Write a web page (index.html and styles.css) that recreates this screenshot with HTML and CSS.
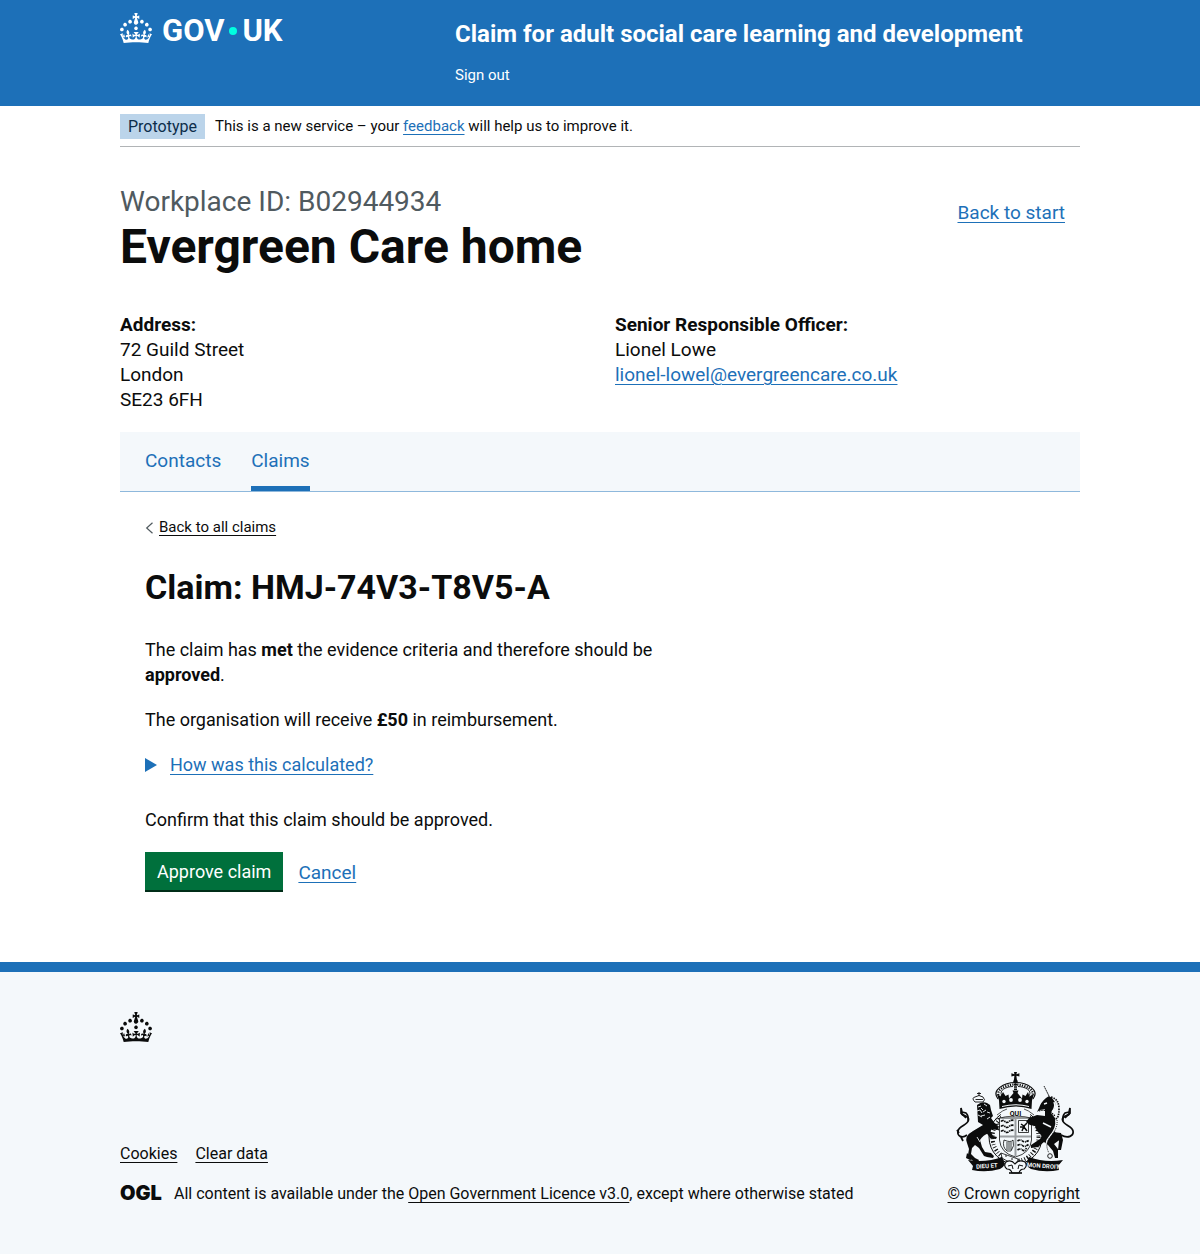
FILE: index.html
```html
<!DOCTYPE html>
<html lang="en">
<head>
<meta charset="utf-8">
<meta name="viewport" content="width=device-width, initial-scale=1">
<title>Claim for adult social care learning and development</title>
<link rel="stylesheet" href="styles.css">
</head>
<body>
<svg class="defs" aria-hidden="true">
  <symbol id="crown" viewBox="0 0 32 30">
    <path fill="currentColor" fill-rule="evenodd" d="M22.6 10.4c-1 .4-2-.1-2.4-1-.4-.9.1-2 1-2.4.9-.4 2 .1 2.4 1s-.1 2-1 2.4m-5.9 6.7c-.9.4-2-.1-2.4-1-.4-.9.1-2 1-2.4.9-.4 2 .1 2.4 1s-.1 2-1 2.4m10.8-3.7c-1 .4-2-.1-2.4-1-.4-.9.1-2 1-2.4.9-.4 2 .1 2.4 1s0 2-1 2.4m3.3 4.8c-1 .4-2-.1-2.4-1-.4-.9.1-2 1-2.4.9-.4 2 .1 2.4 1s-.1 2-1 2.4M17 4.7l2.3 1.2V2.5l-2.3.7-.2-.2.9-3h-3.4l.9 3-.2.2c-.1.1-2.3-.7-2.3-.7v3.4L15 4.7c.1.1.1.2.2.2l-1.3 4c-.1.2-.1.4-.1.6 0 1.1.8 2 1.9 2.2h.7c1-.2 1.9-1.1 1.9-2.1 0-.2 0-.4-.1-.6l-1.3-4c-.1-.2 0-.2.1-.3m-7.6 5.7c.9.4 2-.1 2.4-1 .4-.9-.1-2-1-2.4-.9-.4-2 .1-2.4 1s0 2 1 2.4m-5 3c.9.4 2-.1 2.4-1 .4-.9-.1-2-1-2.4-.9-.4-2 .1-2.4 1s.1 2 1 2.4m-3.2 4.8c.9.4 2-.1 2.4-1 .4-.9-.1-2-1-2.4-.9-.4-2 .1-2.4 1s0 2 1 2.4m14.8 11c4.4 0 8.6.3 12.3.8 1.1-4.5 2.4-7 3.7-8.8l-2.5-.9c.2 1.3.3 1.9 0 2.7-.4-.4-.8-1.1-1.1-2.3l-1.2 4c.7-.5 1.3-.8 2-.9-1.1 2.5-2.6 3.1-3.5 3-1.1-.2-1.7-1.2-1.5-2.1.3-1.2 1.5-1.5 2.1-.1 1.1-2.3-.8-3-2-2.3 1.9-1.9 2.1-3.5.6-5.6-2.1 1.6-2.1 3.2-1.2 5.5-1.2-1.4-3.2-.6-2.5 1.6.9-1.4 2.1-.5 1.9.8-.2 1.1-1.7 2.1-3.5 1.9-2.7-.2-2.9-2.1-2.9-3.6.7-.1 1.9.5 2.9 1.9l.4-4.3c-1.1 1.1-2.1 1.4-3.2 1.4.4-1.2 2.1-3 2.1-3h-5.4s1.7 1.9 2.1 3c-1.1 0-2.1-.2-3.2-1.4l.4 4.3c1-1.4 2.2-2 2.9-1.9-.1 1.5-.2 3.4-2.9 3.6-1.9.2-3.4-.8-3.5-1.9-.2-1.3 1-2.2 1.9-.8.7-2.3-1.2-3-2.5-1.6.9-2.2.9-3.9-1.2-5.5-1.5 2-1.3 3.7.6 5.6-1.2-.7-3.1 0-2 2.3.6-1.4 1.8-1.1 2.1.1.2.9-.3 1.9-1.5 2.1-.9.2-2.4-.5-3.5-3 .6 0 1.2.3 2 .9l-1.2-4c-.3 1.1-.7 1.9-1.1 2.3-.3-.8-.2-1.4 0-2.7l-2.9.9C1.3 23 2.6 25.5 3.7 30c3.7-.5 7.9-.8 12.3-.8"/>
  </symbol>
</svg>

<header class="header">
  <div class="container header-row">
    <a class="logo" href="#" aria-label="GOV.UK">
      <svg class="crown" aria-hidden="true"><use href="#crown"/></svg>
      <span class="logo-name">GOV<span class="logo-dot"></span>UK</span>
    </a>
    <div class="header-content">
      <a class="service-name" href="#">Claim for adult social care learning and development</a>
      <nav aria-label="Account"><a class="sign-out" href="#">Sign out</a></nav>
    </div>
  </div>
</header>

<div class="container">
  <div class="phase-banner">
    <strong class="tag">Prototype</strong>
    <span>This is a new service – your <a class="link" href="#">feedback</a> will help us to improve it.</span>
  </div>

  <main>
    <div class="title-row">
      <div>
        <span class="caption">Workplace ID: B02944934</span>
        <h1 class="heading-xl">Evergreen Care home</h1>
      </div>
      <a class="link start-link" href="#">Back to start</a>
    </div>

    <div class="details-grid">
      <div>
        <h2 class="heading-s">Address:</h2>
        <p>72 Guild Street<br>London<br>SE23 6FH</p>
      </div>
      <div>
        <h2 class="heading-s">Senior Responsible Officer:</h2>
        <p>Lionel Lowe<br><a class="link" href="#">lionel-lowel@evergreencare.co.uk</a></p>
      </div>
    </div>

    <nav class="tabs" aria-label="Workplace">
      <a class="tab" href="#">Contacts</a>
      <a class="tab tab-current" href="#" aria-current="page">Claims</a>
    </nav>

    <div class="claim">
      <a class="back-link" href="#">
        <svg class="chevron" viewBox="0 0 8 12" aria-hidden="true"><path d="M7.500.7 1.700 6l5.800 5.300" fill="none" stroke="#505a5f" stroke-width="1.200"/></svg>
        <span class="back-text">Back to all claims</span>
      </a>
      <h2 class="heading-l">Claim: HMJ-74V3-T8V5-A</h2>
      <div class="two-thirds">
        <p class="body">The claim has <b>met</b> the evidence criteria and therefore should be <b>approved</b>.</p>
        <p class="body">The organisation will receive <b>£50</b> in reimbursement.</p>
        <details class="disclosure">
          <summary class="summary"><span class="link">How was this calculated?</span></summary>
        </details>
        <p class="body">Confirm that this claim should be approved.</p>
        <div class="button-group">
          <button class="button" type="button">Approve claim</button>
          <a class="link" href="#">Cancel</a>
        </div>
      </div>
    </div>
  </main>
</div>

<footer class="footer">
  <div class="container">
    <svg class="crown" aria-hidden="true"><use href="#crown"/></svg>
    <div class="footer-row">
      <div class="footer-meta">
        <ul class="footer-links">
          <li><a class="footer-link" href="#">Cookies</a></li>
          <li><a class="footer-link" href="#">Clear data</a></li>
        </ul>
        <div class="licence">
          <span class="ogl">OGL</span>
          <span>All content is available under the <a class="footer-link" href="#">Open Government Licence v3.0</a>, except where otherwise stated</span>
        </div>
      </div>
      <a class="copyright" href="#">
        <svg class="crest" viewBox="-1 0 120 102" aria-hidden="true">
          <!-- Imperial crown -->
          <g fill="#0b0c0c">
            <path d="M59 0h3l-.6 2.2 3-.9v3.2l-3-.8.5 4.3h-3l.5-4.3-3 .8V1.300l3 .9z"/>
            <circle cx="60.500" cy="9.500" r="2.200"/>
            <path d="M44 28.500 42 22l3.500 2.500L48 20l2.500 4 3-1.500.5 4 4.500-5.500-1-2.500h6l-1 2.500 4.500 5.500.5-4 3 1.500 2.500-4 1.500 4.500L79 22l-2 6.500-.5 8.500q-15.500-5-32 0z"/>
          </g>
          <g fill="none" stroke="#0b0c0c">
            <path d="M43 27C36 18 49 10.500 60.500 10.500S85 18 78 27" stroke-width="1.200"/>
            <path d="M47 24C43 18 52 14.500 58 14.500M74 24C78 18 69 14.500 63 14.500" stroke-width=".9"/>
            <path d="M45 25C39 19 50 12.500 60.500 12.500S82 19 76 25" stroke-width="2.200" stroke-dasharray="1.200 1.200"/>
            <path d="M60.500 12v9" stroke-width="3" stroke-dasharray="1.500 .8"/>
          </g>
          <g fill="#f4f8fb">
            <circle cx="49" cy="29.500" r="1.700"/><circle cx="56" cy="28" r="1.900"/><circle cx="65" cy="28" r="1.900"/><circle cx="72" cy="29.500" r="1.700"/>
            <path d="M47 34q13.500-3.500 27 0v1q-13.500-3.500-27 0z"/>
          </g>
          <!-- Garter and shield -->
          <ellipse cx="60.500" cy="65" rx="26.500" ry="27" fill="#f4f8fb" stroke="#0b0c0c" stroke-width="1"/>
          <ellipse cx="60.500" cy="65" rx="23" ry="24" fill="none" stroke="#0b0c0c" stroke-width="4" stroke-dasharray="1 2 .8 1.800 1.500 2" pathLength="150"/>
          <path d="M46 38.500q14.500-4 29 0v7.500H46z" fill="#f4f8fb"/>
          <path d="M41 47q19-6 39 0M42 43q6-5 10-6M79 43q-6-5-10-6" fill="none" stroke="#0b0c0c" stroke-width=".7"/>
          <text class="crest-text" x="60.500" y="44" text-anchor="middle">QUI</text>
          <path d="M44.500 46h32v22q-1 13-16 17-15-4-16-17z" fill="#f4f8fb" stroke="#0b0c0c" stroke-width=".8"/>
          <path d="M60.500 46v38M45 64.500h31" stroke="#9a9ea1" stroke-width="2"/>
          <g fill="none" stroke="#0b0c0c" stroke-width="1.700">
            <path d="M46 49.500q2-2 4 0t4 0 5-1M46 54.500q2-2 4 0t4 0 5-1M46 59.500q2-2 4 0t4 0 5-1" stroke-dasharray="3 .7 1.200 .5"/>
            <path d="M62.500 69q3-2 5 0t7-1M62.500 73.500q3-2 5 0t6-1M62.500 78q3-2 5 0t4-2" stroke-dasharray="2.500 .7 1 .6"/>
            <path d="M63.500 48.500h10v12h-10z" stroke-width=".8"/>
            <path d="m66 52 3 2 3-3m-3 3-2 5m2-4 3 4m-7-4h5" stroke-width="1.500"/>
            <path d="M49 68q-2 7 3 11h4q4-5 2-11-2 3-9 0zM52 70v8m2-8v8m2-8v8" stroke-width=".8"/>
          </g>
          <path d="m46 81 17 6-1 6-10-4-5-3z" fill="#f4f8fb" stroke="#0b0c0c" stroke-width=".8"/>
          <circle cx="51" cy="84" r=".8"/><circle cx="57" cy="87" r=".8"/>
          <!-- Lion -->
          <g fill="#0b0c0c">
            <path d="M22 33q5-4 10-2l3 2 1 5 2 6-2 2 5 7 3 3-2 2-5-1-3 4q-6 2-9 7l2 7 3 5 6 1 3 3-1 2-6-1-3-1-5-8-4-3-3 3-1 6 4 4 4 2-1 2-5-1-5-6 1-6-2-6q-3-7 6-12l10-6-5-3z"/>
            <path d="m12 81-1 5 4 2 5-1-4-2zM31 60l4 6 6 1 1-2-4-1-3-6z"/>
          </g>
          <g fill="none" stroke="#0b0c0c">
            <path d="M12 63C7 67 2 64 3 59s10-6 10.500-11S8 45 6 41" stroke-width="1.700"/>
            <path d="M13 49q1-5-2-8l-4-1-1-4 0 5 5 5M4 61l-2-3M6 65l2 4" stroke-width="1.700"/>
            <path d="M20 30q-4-4 0-5 4-3 8 0 3 3 0 5zM24 24v-4m-2 1.500h4M20.500 27.500h7.500" stroke-width=".9"/>
            <path d="m37 53 7-1m-6 2 7 1m-6 0 5 3" stroke-width="1.200"/>
          </g>
          <path d="m23 35 3-1m3-2 3 2m-10 5 3-1 2 3m4-3-3 2m-2 4 4-1m2-3 3 1M26 36l2 2M23 43l4 2M32 47l3-2M16 60q3-4 7-5m-1 10 3 5" fill="none" stroke="#f4f8fb" stroke-width=".9"/>
          <!-- Unicorn -->
          <g fill="#0b0c0c">
            <path d="M84 36q2-6 7-10l3-2 3 2 3 4q1 5-2 8l-2 3 4 5 1 7-2 6 5 5-1 5-4 3 4 5v9h-3l-2-7-5-6-4-3-6 5-7 1 0-3 9-6 2-3-5-5-2-5-5-1-4-3 3-4 8-3 8 1 0-7-5 1-3 2z"/>
            <path d="m98 60 8 1 2 7-2 10h-3l1-9-7-5z"/>
          </g>
          <g fill="none" stroke="#0b0c0c">
            <path d="M94 24 89 14" stroke-width=".9" stroke-dasharray="2 .4"/>
            <path d="M96 25q8 2 8 12t-4 10" stroke-width="1.700" stroke-dasharray="1.500 1"/>
            <path d="M84 39q8-3 16 5" stroke-width="1.200" stroke-dasharray="1.500 .8"/>
            <path d="M106 63c7 4 13 1 12-4s-10-6-10.500-11S113 45 115 41" stroke-width="1.700"/>
            <path d="M108 49q-1-5 2-8l4-1 1-4 0 5-5 5" stroke-width="1.700"/>
          </g>
          <path d="M99 30q2 5-2 10M89 32l3-1M88 51l8 4M101 48q1 8-6 16t-1 14" fill="none" stroke="#f4f8fb" stroke-width="1.400"/>
          <path d="M102 48q1 8-6 16t-2 17" fill="none" stroke="#0b0c0c" stroke-width="1" stroke-dasharray="1 1"/>
          <circle cx="95" cy="84" r="2.300" fill="none" stroke="#0b0c0c" stroke-width=".9"/>
          <!-- Motto scroll -->
          <path d="M13 88q18 3 34-3l3 7q-2 4-5 5-14 4-28 1l1-4z" fill="#0b0c0c"/>
          <path d="M108 88q-18 3-34-3l-3 7q2 4 5 5 14 4 28 1l-1-4z" fill="#0b0c0c"/>
          <path d="M51 90q5-3 9 2 4-5 10-2 3 4-1 7-4 0-5 4h-7q-1-4-5-4-4-3-1-7z" fill="#f4f8fb" stroke="#0b0c0c" stroke-width="1.200"/>
          <path d="m53 94 4-1 1 4m10-3-4-1-1 4" fill="none" stroke="#0b0c0c" stroke-width="1"/>
          <path d="M54 101h13" stroke="#0b0c0c" stroke-width="1.600"/>
          <text class="motto" x="32" y="96" text-anchor="middle" transform="rotate(-4 32 96)">DIEU ET</text>
          <text class="motto" x="88" y="96" text-anchor="middle" transform="rotate(4 88 96)">MON DROIT</text>
        </svg>
        <span class="copyright-text">© Crown copyright</span>
      </a>
    </div>
  </div>
</footer>
</body>
</html>
```
FILE: styles.css
```css
* {
  box-sizing: border-box;
}

body {
  margin: 0;
  background: #fff;
  color: #0b0c0c;
  font-family: Roboto, Arial, sans-serif;
  font-size: 19px;
  line-height: 25px;
}

h1,
h2,
p,
ul {
  margin: 0;
  padding: 0;
}

.defs {
  display: none;
}

.container {
  max-width: 960px;
  margin: 0 auto;
}

.crown {
  display: block;
  width: 32px;
  height: 30px;
}

.link {
  color: #1d70b8;
  text-decoration: underline;
  text-decoration-thickness: 1px;
  text-underline-offset: 3px;
}

/* Header */
.header {
  background: #1d70b8;
  color: #fff;
}

.header-row {
  display: flex;
  padding: 13px 0 18px;
}

.header a {
  color: #fff;
  text-decoration: none;
}

.logo {
  display: flex;
  flex: 0 0 335px;
  align-items: flex-start;
  gap: 10px;
}

.logo-name {
  display: flex;
  align-items: center;
  font-size: 31px;
  font-weight: 700;
  line-height: 36px;
}

.logo-dot {
  width: 8px;
  height: 8px;
  margin: 0 5px;
  border-radius: 50%;
  background: #00ffe0;
}

.header-content {
  padding-top: 6px;
}

.service-name {
  display: block;
  margin-bottom: 14px;
  font-size: 24px;
  font-weight: 700;
  line-height: 30px;
}

.sign-out {
  display: block;
  font-size: 15px;
}

/* Phase banner */
.phase-banner {
  display: flex;
  gap: 10px;
  padding: 8px 0 7px;
  border-bottom: 1px solid #b1b4b6;
  font-size: 15px;
}

.tag {
  padding: 0 8px;
  background: #bbd4ea;
  color: #0c2d4a;
  font-size: 16px;
  font-weight: 400;
}

/* Workplace summary */
.title-row {
  display: flex;
  justify-content: space-between;
  align-items: flex-start;
  padding-top: 40px;
}

.caption {
  display: block;
  color: #505a5f;
  font-size: 28px;
  line-height: 30px;
}

.heading-xl {
  margin: 5px 0 40px;
  font-size: 48px;
  line-height: 50px;
}

.start-link {
  margin: 13px 15px 0 0;
}

.details-grid {
  display: grid;
  grid-template-columns: 1fr 1fr;
  gap: 30px;
  margin-bottom: 20px;
}

.heading-s {
  font-size: 19px;
  line-height: 25px;
}

/* Tabs */
.tabs {
  display: flex;
  gap: 30px;
  padding: 0 25px;
  border-bottom: 1px solid #8eb8dc;
  background: #f4f8fb;
}

.tab {
  padding: 16px 0 13px;
  border-bottom: 5px solid transparent;
  color: #1d70b8;
  text-decoration: none;
}

.tab-current {
  border-color: #1d70b8;
}

/* Claim */
.claim {
  padding: 23px 25px 70px;
}

.back-link {
  display: flex;
  align-items: center;
  gap: 6px;
  color: #0b0c0c;
  font-size: 15px;
  text-decoration: none;
}

.back-text {
  text-decoration: underline;
  text-underline-offset: 3px;
}

.chevron {
  width: 8px;
  height: 12px;
}

.heading-l {
  margin: 27px 0 30px;
  font-size: 34px;
  line-height: 40px;
}

.two-thirds {
  width: 63%;
}

.body {
  margin-bottom: 20px;
  font-size: 18px;
}

.disclosure {
  margin-bottom: 30px;
  font-size: 18px;
}

.summary {
  display: flex;
  align-items: center;
  gap: 13px;
  cursor: pointer;
}

.summary::before {
  content: "";
  border: solid transparent;
  border-width: 7px 0 7px 12px;
  border-left-color: #1d70b8;
}

.button-group {
  display: flex;
  align-items: center;
  gap: 15px;
}

.button {
  padding: 7px 12px 6px;
  border: 0;
  border-bottom: 2px solid #002d18;
  background: #00703c;
  color: #fff;
  font: inherit;
  font-size: 18px;
}

/* Footer */
.footer {
  padding: 40px 0 48px;
  border-top: 10px solid #1d70b8;
  background: #f4f8fb;
  font-size: 16px;
}

.footer-link,
.copyright-text {
  color: #0b0c0c;
  text-decoration: underline;
  text-decoration-thickness: 1px;
  text-underline-offset: 3px;
}

.footer-row {
  display: flex;
  justify-content: space-between;
  align-items: flex-end;
  margin-top: 30px;
}

.footer-links {
  display: flex;
  gap: 18px;
  margin-bottom: 15px;
  list-style: none;
}

.licence {
  display: flex;
  gap: 13px;
}

.ogl {
  width: 41px;
  font-family: Inter, Arial, sans-serif;
  font-size: 20px;
  font-weight: 900;
}

.copyright {
  display: flex;
  flex-direction: column;
  align-items: center;
  gap: 7px;
  color: #0b0c0c;
  text-decoration: none;
}

.crest {
  width: 120px;
  height: 102px;
}

.crest-text {
  fill: #0b0c0c;
  font-size: 7px;
  font-weight: 700;
}

.motto {
  fill: #f4f8fb;
  font-size: 6px;
  font-weight: 700;
}
```
